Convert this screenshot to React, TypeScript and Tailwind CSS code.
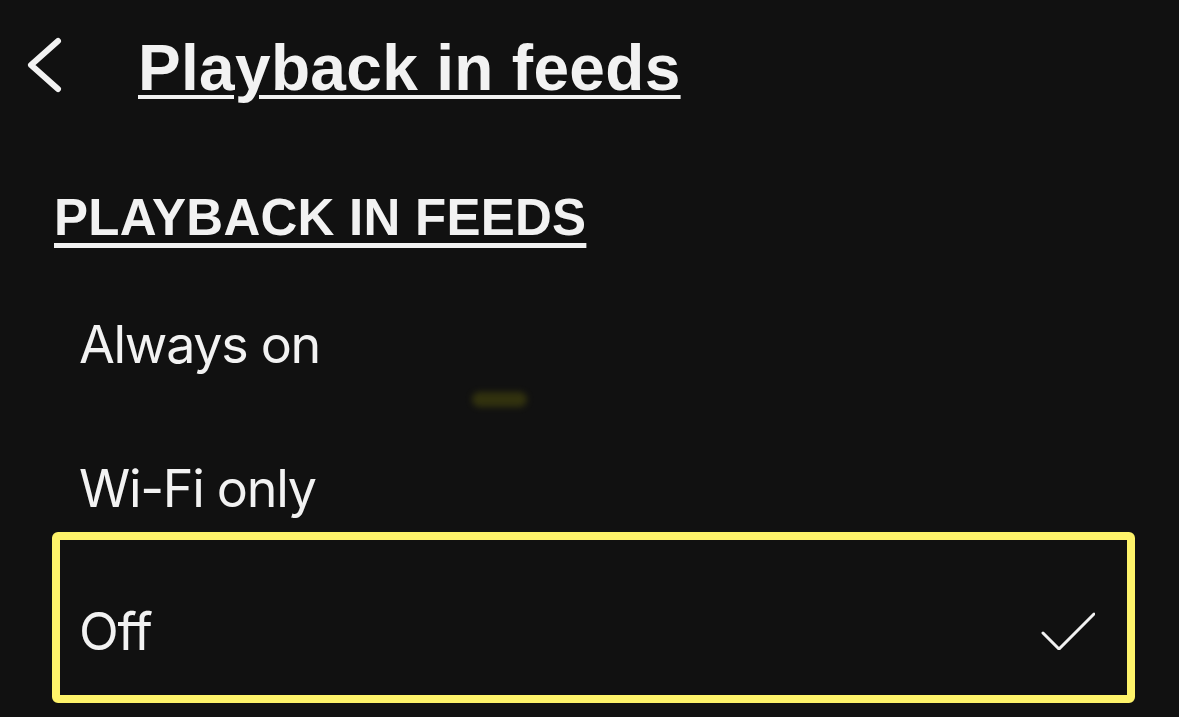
import React from "react";

export default function App() {
  return (
    <div className="w-[1179px] h-[717px] bg-[#111111] text-[#f2f2f2] overflow-hidden relative">
      {/* header */}
      <div className="flex items-start pl-[24px] pt-[36px]">
        <svg width="40" height="64" viewBox="0 0 40 64" fill="none" className="shrink-0">
          <path d="M34 5 L7 29 L34 53" stroke="#f2f2f2" strokeWidth="6" strokeLinecap="round" strokeLinejoin="round" />
        </svg>
        <h1 className="ml-[74px] text-[64px] leading-[64px] font-bold underline decoration-[4px] underline-offset-[5px] tracking-[0.005em] font-['Liberation_Sans',Arial,sans-serif]">
          Playback in feeds
        </h1>
      </div>

      {/* section header */}
      <div className="mt-[92px] pl-[54px]">
        <h2 className="inline-block text-[51px] leading-[51px] font-bold underline decoration-[5px] underline-offset-[8px] tracking-[0.005em] font-['Liberation_Sans',Arial,sans-serif]">
          PLAYBACK IN FEEDS
        </h2>
      </div>

      {/* options */}
      <div className="font-['Inter','Liberation_Sans',sans-serif] text-[52px] leading-[51px] tracking-[-0.025em]">
        <div className="mt-[76px] pl-[79px]">Always on</div>
        <div className="mt-[93px] pl-[79px]">Wi-Fi only</div>
        <div className="mt-[18px] ml-[52px] w-[1083px] h-[171px] border-[8px] border-[#fef36a] rounded-[6px] flex items-start justify-between pl-[19px] pr-[32px] pt-[66px]">
          <span>Off</span>
          <svg width="56" height="44" viewBox="0 0 56 44" fill="none">
            <path d="M4 27 L20 43 L55 8" stroke="#f2f2f2" strokeWidth="3" strokeLinecap="round" strokeLinejoin="round" />
          </svg>
        </div>
      </div>

      {/* faint artifact */}
      <div className="absolute left-[472px] top-[392px] w-[55px] h-[15px] rounded-full bg-[#3a3a0e] blur-[3px] opacity-80" />
    </div>
  );
}
